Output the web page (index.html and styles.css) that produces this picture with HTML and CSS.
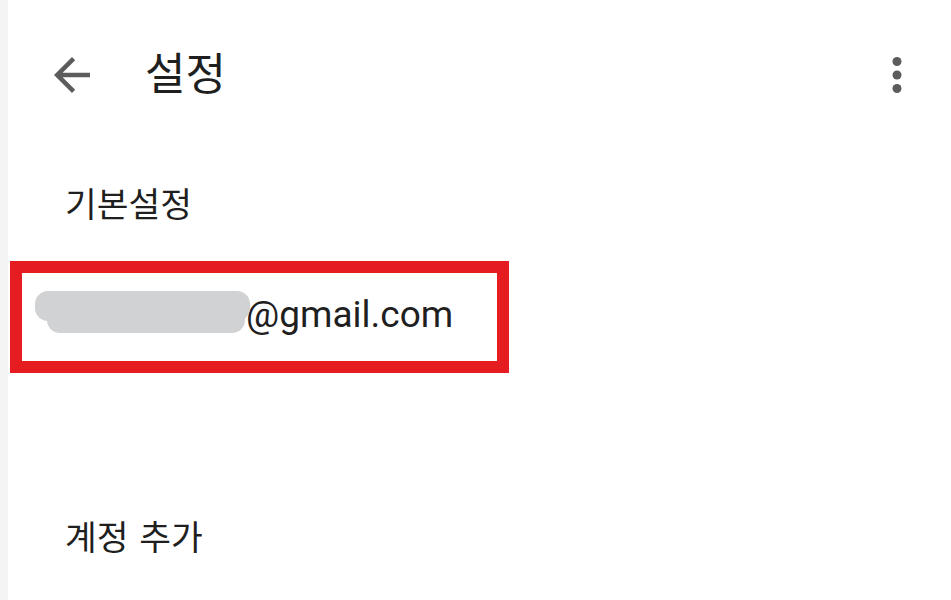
FILE: index.html
```html
<!DOCTYPE html>
<html lang="ko">
<head>
<meta charset="utf-8">
<title>설정</title>
<link rel="stylesheet" href="styles.css">
</head>
<body>
<div class="page">
  <div class="strip"></div>
  <main class="content">
    <header class="appbar">
      <span class="icon back" aria-label="뒤로">
        <svg viewBox="0 0 24 24" width="54" height="54"><path d="M20 11H7.83l5.59-5.59L12 4l-8 8 8 8 1.41-1.41L7.83 13H20v-2z"/></svg>
      </span>
      <h1 class="title">설정</h1>
      <span class="spacer"></span>
      <span class="icon more" aria-label="더보기">
        <svg viewBox="0 0 24 24" width="54" height="54"><circle cx="12" cy="6" r="2"/><circle cx="12" cy="12" r="2"/><circle cx="12" cy="18" r="2"/></svg>
      </span>
    </header>
    <div class="section-title">기본설정</div>
    <div class="account">
      <span class="redact"><span class="r1"></span><span class="r2"></span></span>
      <span class="email">@gmail.com</span>
    </div>
    <div class="item">계정 추가</div>
  </main>
</div>
</body>
</html>
```
FILE: styles.css
```css
html, body {
  margin: 0;
  padding: 0;
  background: #ffffff;
}
.page {
  display: flex;
  width: 951px;
  height: 600px;
  overflow: hidden;
}
.strip {
  width: 8px;
  flex: none;
  background: #f4f4f4;
}
.content {
  flex: 1;
  display: flex;
  flex-direction: column;
  font-family: "Noto Sans CJK KR", "Noto Sans", sans-serif;
  color: #1f1f1f;
}
.appbar {
  display: flex;
  align-items: flex-start;
  padding: 48px 27px 0 37px;
  height: 54px;
}
.icon {
  width: 54px;
  height: 54px;
  flex: none;
  fill: #5c5c5c;
}
.icon svg {
  display: block;
}
.title {
  margin: 0 0 0 46px;
  font-size: 44px;
  line-height: 46px;
  font-weight: 400;
  color: #1f1f1f;
}
.spacer {
  flex: 1;
}
.section-title {
  margin: 80px 0 0 57px;
  font-size: 34.5px;
  line-height: 40px;
}
.account {
  box-sizing: border-box;
  margin: 39px 0 0 2px;
  width: 499px;
  height: 112px;
  border: 12px solid #e51d21;
  display: flex;
  align-items: flex-start;
  padding-left: 13px;
}
.redact {
  position: relative;
  width: 211px;
  height: 42px;
  margin-top: 18px;
  flex: none;
}
.r1, .r2 {
  position: absolute;
  background: #d1d2d4;
  border-radius: 13px;
}
.r1 {
  left: 0;
  top: 0;
  width: 215px;
  height: 30px;
}
.r2 {
  left: 12px;
  top: 9px;
  width: 198px;
  height: 33px;
}
.email {
  margin-top: 21px;
  font-family: Roboto, "Noto Sans", sans-serif;
  font-size: 37px;
  line-height: 42px;
  color: #1f1f1f;
}
.item {
  margin: 142px 0 0 57px;
  font-size: 34.5px;
  line-height: 40px;
  word-spacing: 1px;
}
```
